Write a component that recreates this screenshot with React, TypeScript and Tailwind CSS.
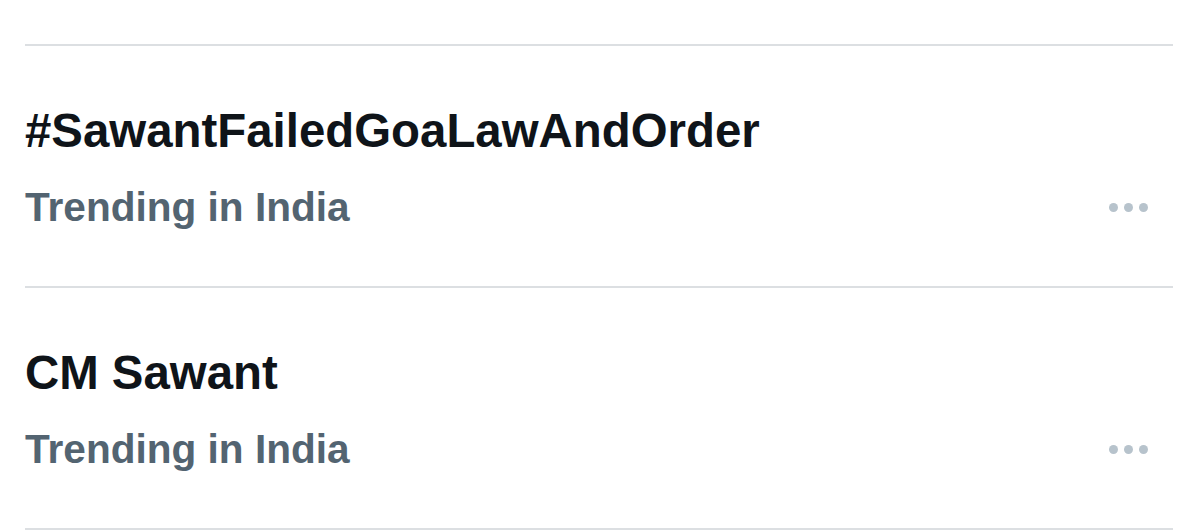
const trends = [
  { title: "#SawantFailedGoaLawAndOrder", context: "Trending in India" },
  { title: "CM Sawant", context: "Trending in India" },
];

function MoreDots() {
  return (
    <div className="mr-[25px] flex items-center gap-[6px]">
      <span className="h-[9px] w-[9px] rounded-full bg-[#b7c3cc]" />
      <span className="h-[9px] w-[9px] rounded-full bg-[#b7c3cc]" />
      <span className="h-[9px] w-[9px] rounded-full bg-[#b7c3cc]" />
    </div>
  );
}

export default function App() {
  return (
    <div
      className="h-[530px] w-full overflow-hidden bg-white pl-[25px] pr-[26px] pt-[44px]"
      style={{ fontFamily: "'Liberation Sans', Arial, sans-serif" }}
    >
      {trends.map((t) => (
        <div key={t.title} className="flex h-[242px] flex-col border-t-2 border-[#dcdfe2] pt-[57px]">
          <div className="text-[47.4px] font-bold leading-[56px] text-[#0f1419]">{t.title}</div>
          <div className="mt-[24px] flex items-center justify-between">
            <span className="text-[40.6px] font-bold leading-[48px] text-[#536471]">{t.context}</span>
            <MoreDots />
          </div>
        </div>
      ))}
      <div className="border-t-2 border-[#dcdfe2]" />
    </div>
  );
}
